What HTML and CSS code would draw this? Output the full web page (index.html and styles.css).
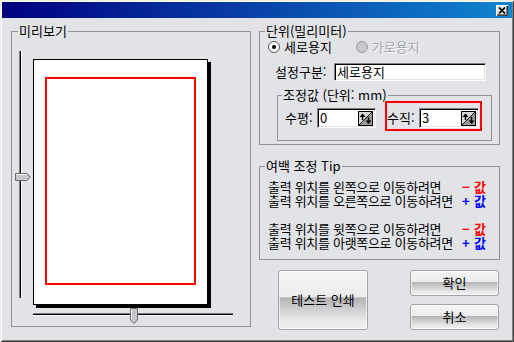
FILE: index.html
```html
<!DOCTYPE html>
<html lang="ko">
<head>
<meta charset="utf-8">
<title>미리보기</title>
<link rel="stylesheet" href="styles.css">
</head>
<body>
<div class="window">
  <div class="titlebar">
    <span class="close-btn"><svg width="8" height="7" viewBox="0 0 8 7"><path d="M1 0.5L7 6.5M7 0.5L1 6.5" stroke="#000" stroke-width="1.7"/></svg></span>
  </div>
  <div class="content">
    <fieldset class="group preview-group">
      <legend>미리보기</legend>
      <div class="preview">
        <div class="vslider">
          <div class="vtrack"></div>
          <svg class="vthumb" width="16" height="8" viewBox="0 0 16 8"><polygon points="0.5,0.5 12,0.5 15,4 12,7.5 0.5,7.5" fill="#c6c7cb" stroke="#6a6a6a"/><path d="M1.5 1.5H11.5" stroke="#fff"/></svg>
        </div>
        <div class="paper"><div class="margin-box"></div></div>
        <div class="hslider">
          <div class="htrack"></div>
          <svg class="hthumb" width="8" height="16" viewBox="0 0 8 16"><polygon points="0.5,0.5 7.5,0.5 7.5,12 4,15.5 0.5,12" fill="#c6c7cb" stroke="#6a6a6a"/><path d="M1.5 1.5V11.5" stroke="#fff"/></svg>
        </div>
      </div>
    </fieldset>
    <div class="right-col">
      <fieldset class="group unit-group">
        <legend>단위(밀리미터)</legend>
        <div class="radio-row">
          <label class="radio"><svg width="12" height="12" viewBox="0 0 12 12"><circle cx="6" cy="6" r="5.5" fill="#fff" stroke="#555"/><circle cx="6" cy="6" r="2" fill="#000"/></svg>세로용지</label>
          <label class="radio disabled"><svg width="12" height="12" viewBox="0 0 12 12"><circle cx="6" cy="6" r="5.5" fill="#c9cacd" stroke="#9a9a9a"/></svg>가로용지</label>
        </div>
        <div class="setting-row">
          <span class="label setting-label">설정구분:</span>
          <div class="textbox wide">세로용지</div>
        </div>
        <fieldset class="group adjust-group">
          <legend>조정값 (단위: mm)</legend>
          <div class="adjust-row">
            <span class="label adj-label">수평:</span>
            <div class="textbox spin"><span>0</span><svg width="15" height="15" viewBox="0 0 15 15"><rect x="0.5" y="0.5" width="14" height="14" fill="#d9d9dc" stroke="#000"/><polygon points="14,1 14,14 1,14" fill="#9a9a9e"/><path d="M1 14L14 1" stroke="#000"/><path d="M4.5 3V9" stroke="#000" stroke-width="1.4"/><polygon points="1.5,6 4.5,2.5 7.5,6" fill="#000"/><path d="M10.5 6V12" stroke="#000" stroke-width="1.4"/><polygon points="7.5,9.5 10.5,13 13.5,9.5" fill="#000"/></svg></div>
            <div class="highlight">
              <span class="label adj-label">수직:</span>
              <div class="textbox spin wide-spin"><span>3</span><svg width="15" height="15" viewBox="0 0 15 15"><rect x="0.5" y="0.5" width="14" height="14" fill="#d9d9dc" stroke="#000"/><polygon points="14,1 14,14 1,14" fill="#9a9a9e"/><path d="M1 14L14 1" stroke="#000"/><path d="M4.5 3V9" stroke="#000" stroke-width="1.4"/><polygon points="1.5,6 4.5,2.5 7.5,6" fill="#000"/><path d="M10.5 6V12" stroke="#000" stroke-width="1.4"/><polygon points="7.5,9.5 10.5,13 13.5,9.5" fill="#000"/></svg></div>
            </div>
          </div>
        </fieldset>
      </fieldset>
      <fieldset class="group tip-group">
        <legend>여백 조정 Tip</legend>
        <div class="tip-lines">
          <span class="tip-text">출력 위치를 왼쪽으로 이동하려면</span><span class="sign minus">−</span><span class="val minus">값</span>
          <span class="tip-text">출력 위치를 오른쪽으로 이동하려면</span><span class="sign plus">+</span><span class="val plus">값</span>
          <span class="tip-blank"></span><span></span><span></span>
          <span class="tip-text">출력 위치를 윗쪽으로 이동하려면</span><span class="sign minus">−</span><span class="val minus">값</span>
          <span class="tip-text">출력 위치를 아랫쪽으로 이동하려면</span><span class="sign plus">+</span><span class="val plus">값</span>
        </div>
      </fieldset>
      <div class="buttons">
        <button class="btn big">테스트 인쇄</button>
        <div class="btn-col">
          <button class="btn small">확인</button>
          <button class="btn small">취소</button>
        </div>
      </div>
    </div>
  </div>
</div>
</body>
</html>
```

FILE: styles.css
```css
* { box-sizing: border-box; }
html, body { margin: 0; padding: 0; }
body {
  width: 514px;
  height: 342px;
  overflow: hidden;
  background: #e2e3e7;
  font-family: "Noto Sans CJK KR", "Noto Sans", sans-serif;
  font-size: 13px;
  line-height: 14px;
  color: #000;
}
.window {
  width: 514px;
  height: 342px;
  padding: 2px;
  background: #e2e3e7;
  box-shadow: inset 1px 1px 0 #eeeff2, inset -1px -1px 0 #404040, inset 2px 2px 0 #fff, inset -2px -2px 0 #808080;
}
.titlebar {
  height: 16px;
  background: linear-gradient(to right, #000080, #1084d0);
  display: flex;
  justify-content: flex-end;
  align-items: center;
  padding-right: 4px;
}
.close-btn {
  width: 12px;
  height: 11px;
  background: #e2e3e7;
  box-shadow: inset 1px 1px 0 #fff, inset -1px -1px 0 #404040, inset -2px -2px 0 #808080;
  display: flex;
  align-items: center;
  justify-content: center;
  padding-right: 1px;
}
.content {
  display: grid;
  grid-template-columns: 240px 241px;
  column-gap: 8px;
  padding: 6px 0 0 9px;
  align-items: start;
}
.group {
  margin: 0;
  padding: 0;
  min-width: 0;
  border: 1px solid #919296;
}
.group > legend {
  padding: 0 1px;
  line-height: 14px;
}
.preview-group > legend { margin-left: 6px; }
.preview {
  display: grid;
  grid-template-columns: 16px 200px;
  column-gap: 2px;
  padding: 13px 0 2px 3px;
}
.vslider {
  position: relative;
  height: 247px;
}
.vtrack {
  position: absolute;
  left: 4px;
  top: 0;
  width: 3px;
  height: 100%;
  background: #000;
  border-left: 1px solid #808080;
  border-right: 1px solid #fff;
}
.vthumb {
  position: absolute;
  left: 0;
  top: 122px;
}
.paper {
  margin-top: 8px;
  width: 175px;
  height: 246px;
  background: #fff;
  border: 1px solid #000;
  box-shadow: 3px 3px 0 #000;
  padding: 17px 0 0 11px;
}
.margin-box {
  width: 151px;
  height: 208px;
  border: 2px solid #ff0000;
}
.hslider {
  grid-column: 2;
  position: relative;
  margin-top: 3px;
  width: 200px;
  height: 16px;
}
.htrack {
  position: absolute;
  left: 0;
  top: 5px;
  width: 100%;
  height: 3px;
  background: #000;
  border-top: 1px solid #808080;
  border-bottom: 1px solid #fff;
}
.hthumb {
  position: absolute;
  left: 97px;
  top: 0;
}
.right-col {
  display: flex;
  flex-direction: column;
}
.unit-group { padding-bottom: 3px; }
.unit-group > legend { margin-left: 5px; }
.radio-row {
  display: flex;
  gap: 24px;
  padding: 2px 0 0 8px;
}
.radio {
  display: flex;
  align-items: center;
  gap: 4px;
  height: 14px;
}
.radio.disabled {
  color: #a3a4a8;
  text-shadow: 1px 1px 0 #fff;
}
.setting-row {
  display: flex;
  align-items: center;
  margin-top: 9px;
  padding-left: 15px;
}
.setting-label { width: 59px; }
.textbox {
  background: #fff;
  border: 1px solid;
  border-color: #808080 #fff #fff #808080;
  box-shadow: inset 1px 1px 0 #000, inset -1px -1px 0 #e2e3e7;
  padding-left: 2px;
}
.textbox.wide {
  width: 152px;
  height: 18px;
  line-height: 16px;
}
.adjust-group {
  margin: 7px 7px 0 17px;
  padding-bottom: 9px;
}
.adjust-group > legend { margin-left: 4px; }
.adjust-row {
  display: flex;
  align-items: flex-start;
  margin-top: -1px;
  padding-left: 7px;
}
.adj-label {
  width: 32px;
  line-height: 20px;
}
.adjust-row > .adj-label,
.adjust-row > .spin { margin-top: 7px; }
.spin {
  display: flex;
  align-items: center;
  justify-content: space-between;
  width: 59px;
  height: 20px;
  line-height: 18px;
  padding-right: 2px;
}
.spin.wide-spin { width: 60px; }
.highlight {
  display: flex;
  margin-left: 9px;
  border: 2px solid #ff0000;
  padding: 5px 1px 1px 0;
}
.tip-group { margin-top: 14px; }
.tip-group > legend { margin-left: 5px; }
.tip-lines {
  display: grid;
  grid-template-columns: 194px 12px 13px;
  grid-auto-rows: 14px;
  padding: 7px 9px 9px 8px;
}
.tip-text {
  white-space: nowrap;
  letter-spacing: -0.3px;
}
.sign, .val { font-weight: bold; }
.minus { color: #ff0000; }
.plus { color: #0000ff; }
.buttons {
  display: flex;
  margin-top: 10px;
  padding-left: 19px;
}
.btn {
  font: inherit;
  color: #000;
  margin: 0;
  padding: 0;
  border: 1px solid #a2a3a7;
  border-radius: 3px;
  display: flex;
  align-items: center;
  justify-content: center;
  background: linear-gradient(to bottom, #f4f4f5 0%, #ececed 45%, #b3b3b5 46%, #cfcfd1 66%, #ebebec 88%, #efeff0 100%);
  box-shadow: inset 0 0 0 1px rgba(255, 255, 255, 0.6);
}
.btn.big {
  width: 90px;
  height: 60px;
}
.btn-col {
  display: flex;
  flex-direction: column;
  gap: 8px;
  margin-left: 42px;
}
.btn.small {
  width: 89px;
  height: 26px;
}
```
